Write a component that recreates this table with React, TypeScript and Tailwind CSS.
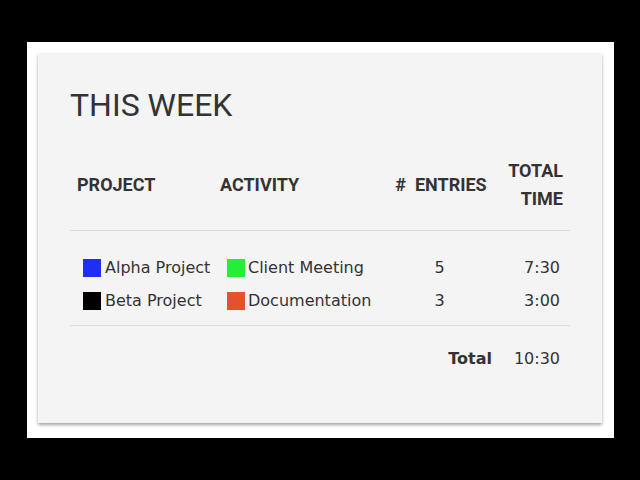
const rows = [
  { project: 'Alpha Project', projectColor: 'bg-[#1f2ef5]', activity: 'Client Meeting', activityColor: 'bg-[#24ee35]', entries: 5, time: '7:30' },
  { project: 'Beta Project', projectColor: 'bg-[#050000]', activity: 'Documentation', activityColor: 'bg-[#e4512f]', entries: 3, time: '3:00' },
]

const cols = 'grid grid-cols-[143px_175px_109px_73px]'

export default function App() {
  return (
    <div className="min-h-screen w-full bg-black pt-[42px] pl-[27px]">
      <div className="w-[587px] h-[396px] bg-white p-[11px]">
        <div className="w-[564px] h-[370px] bg-[#f4f4f4] px-[32px] pt-[32px] shadow-[0_2px_3px_rgba(0,0,0,0.35)] text-[#333]">
          <h1 className="font-['Roboto',sans-serif] text-[32px] leading-[40px]">THIS WEEK</h1>

          {/* header */}
          <div className={`${cols} mt-[32px] pb-[17px] border-b border-[#dcdcdc] font-['Roboto',sans-serif] font-bold text-[18px] leading-[28px] items-center`}>
            <div className="pl-[7px]">PROJECT</div>
            <div className="pl-[7px]">ACTIVITY</div>
            <div className="text-center whitespace-pre pr-[3px]">{'#  ENTRIES'}</div>
            <div className="text-right pr-[7px]">TOTAL<br />TIME</div>
          </div>

          {/* body */}
          <div className="pt-[20px] pb-[8px] border-b border-[#dcdcdc] font-['DejaVu_Sans',sans-serif] text-[16px]">
            {rows.map((r) => (
              <div key={r.project} className={`${cols} h-[33px] items-center`}>
                <div className="flex items-center pl-[13px]">
                  <span className={`w-[18px] h-[18px] mr-[4px] ${r.projectColor}`} />
                  {r.project}
                </div>
                <div className="flex items-center pl-[14px]">
                  <span className={`w-[18px] h-[18px] mr-[3px] ${r.activityColor}`} />
                  {r.activity}
                </div>
                <div className="text-center pr-[6px]">{r.entries}</div>
                <div className="text-right pr-[10px]">{r.time}</div>
              </div>
            ))}
          </div>

          {/* total */}
          <div className={`${cols} h-[66px] items-center font-['DejaVu_Sans',sans-serif] text-[16px]`}>
            <div />
            <div />
            <div className="text-right font-bold pr-[5px]">Total</div>
            <div className="text-right pr-[10px]">10:30</div>
          </div>
        </div>
      </div>
    </div>
  )
}
